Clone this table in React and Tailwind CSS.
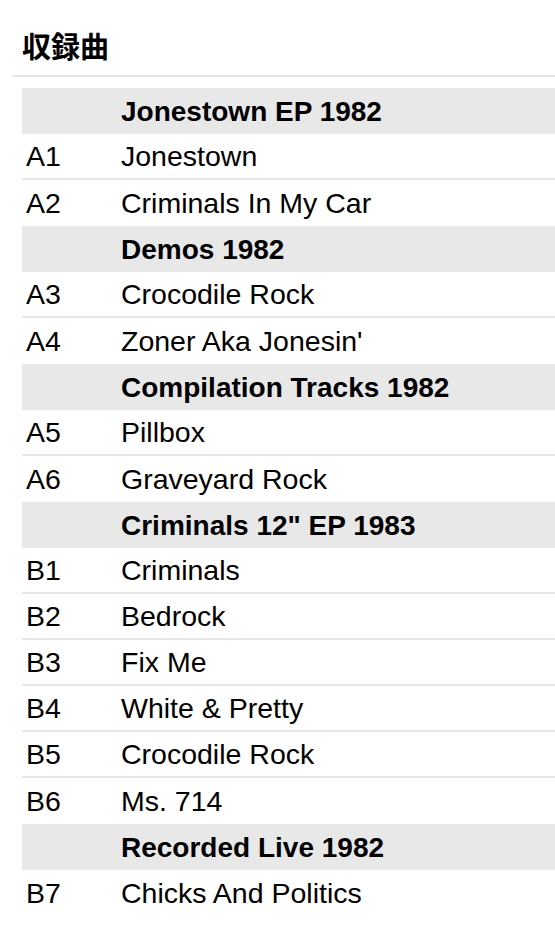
import React from 'react';

const tracks = [
  { heading: 'Jonestown EP 1982' },
  { pos: 'A1', title: 'Jonestown' },
  { pos: 'A2', title: 'Criminals In My Car' },
  { heading: 'Demos 1982' },
  { pos: 'A3', title: 'Crocodile Rock' },
  { pos: 'A4', title: "Zoner Aka Jonesin'" },
  { heading: 'Compilation Tracks 1982' },
  { pos: 'A5', title: 'Pillbox' },
  { pos: 'A6', title: 'Graveyard Rock' },
  { heading: 'Criminals 12" EP 1983' },
  { pos: 'B1', title: 'Criminals' },
  { pos: 'B2', title: 'Bedrock' },
  { pos: 'B3', title: 'Fix Me' },
  { pos: 'B4', title: 'White & Pretty' },
  { pos: 'B5', title: 'Crocodile Rock' },
  { pos: 'B6', title: 'Ms. 714' },
  { heading: 'Recorded Live 1982' },
  { pos: 'B7', title: 'Chicks And Politics' },
];

const App = () => {
  return (
    <div className="min-h-screen bg-white text-black pl-[12px] font-['Liberation_Sans',Arial,sans-serif]">
      {/* Title */}
      <div className="border-b-2 border-[#e6e6e6] pl-[10px] pt-[25px] pb-[10px]">
        <h2 className="text-[29px] leading-[40px] font-bold font-['Noto_Sans_CJK_JP',sans-serif]">収録曲</h2>
      </div>

      {/* Tracklist */}
      <div className="ml-[10px] mt-[11px]">
        {tracks.map((t, i) =>
          t.heading ? (
            <div key={i} className="flex items-center h-[46px] pt-[2px] bg-[#e8e8e8]">
              <div className="w-[95px] shrink-0" />
              <div className="pl-[4px] text-[28px] font-bold">{t.heading}</div>
            </div>
          ) : (
            <div
              key={i}
              className={`flex items-center h-[46px] pt-[1px] text-[28.5px] ${
                tracks[i + 1] && !tracks[i + 1].heading ? 'border-b-2 border-[#e6e6e6]' : ''
              }`}
            >
              <div className="w-[95px] shrink-0 pl-[4px]">{t.pos}</div>
              <div className="pl-[4px]">{t.title}</div>
            </div>
          )
        )}
      </div>
    </div>
  );
};

export default App;
